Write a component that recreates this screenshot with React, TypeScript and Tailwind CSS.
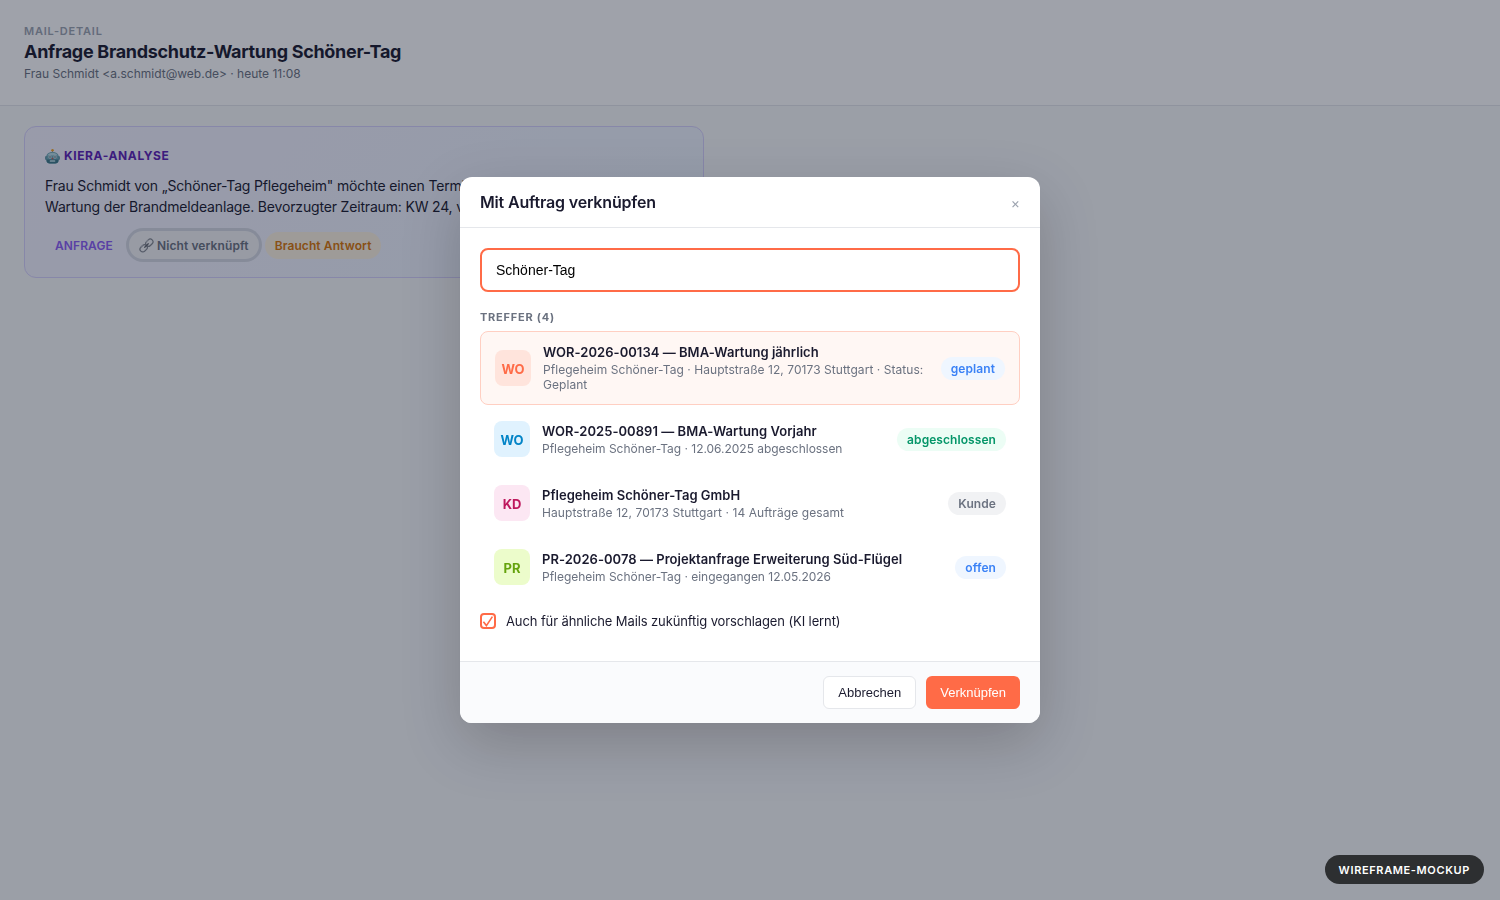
import clsx from "clsx";

interface Hit {
  code: string;
  title: string;
  sub: string;
  status: string;
  iconClass: string;
  subClass: string;
  statusClass: string;
  active?: boolean;
}

const hits: Hit[] = [
  {
    code: "WO",
    title: "WOR-2026-00134 — BMA-Wartung jährlich",
    sub: "Pflegeheim Schöner-Tag · Hauptstraße 12, 70173 Stuttgart · Status: Geplant",
    status: "geplant",
    iconClass: "bg-[#ffe4dc] text-[#ff6b47]",
    subClass: "tracking-[0.05px]",
    statusClass: "bg-[#eff6ff] text-[#3b82f6]",
    active: true,
  },
  {
    code: "WO",
    title: "WOR-2025-00891 — BMA-Wartung Vorjahr",
    sub: "Pflegeheim Schöner-Tag · 12.06.2025 abgeschlossen",
    status: "abgeschlossen",
    iconClass: "bg-[#e0f2fe] text-[#0284c7]",
    subClass: "tracking-[-0.03px]",
    statusClass: "bg-[#ecfdf5] text-[#059669]",
  },
  {
    code: "KD",
    title: "Pflegeheim Schöner-Tag GmbH",
    sub: "Hauptstraße 12, 70173 Stuttgart · 14 Aufträge gesamt",
    status: "Kunde",
    iconClass: "bg-[#fce7f3] text-[#be185d]",
    subClass: "tracking-[0.08px]",
    statusClass: "bg-[#f1f2f4] text-[#6b7280]",
  },
  {
    code: "PR",
    title: "PR-2026-0078 — Projektanfrage Erweiterung Süd-Flügel",
    sub: "Pflegeheim Schöner-Tag · eingegangen 12.05.2026",
    status: "offen",
    iconClass: "bg-[#ecfccb] text-[#65a30d]",
    subClass: "tracking-[-0.03px]",
    statusClass: "bg-[#eff6ff] text-[#3b82f6]",
  },
];

const RobotIcon = () => (
  <svg className="size-[15px] shrink-0" viewBox="0 0 30 30">
    <path d="M15 3v5" stroke="#8a8f98" strokeWidth="2" />
    <circle cx="15" cy="2.5" r="2.5" fill="#f5a623" />
    <rect x="0.5" y="14" width="4" height="8" rx="2" fill="#3f7f90" />
    <rect x="25.5" y="14" width="4" height="8" rx="2" fill="#3f7f90" />
    <path d="M2.5 16C2.5 9 8 6 15 6s12.500 3 12.500 10v6c0 5-3 7-7 7h-11c-4 0-7-2-7-7z" fill="#6fa9b6" />
    <path d="M5 13C6.500 9 10 7.500 15 7.500s8.500 1.500 10 5.500z" fill="#b9dce4" />
    <path d="M3 21h24v1c0 5-3 7-7 7H10c-4 0-7-2-7-7z" fill="#3d7888" />
    <circle cx="10" cy="16" r="3" fill="#e8f6fa" />
    <circle cx="20" cy="16" r="3" fill="#e8f6fa" />
    <circle cx="10" cy="16" r="1.500" fill="#24404c" />
    <circle cx="20" cy="16" r="1.500" fill="#24404c" />
    <path d="m15 17 2 3.500h-4z" fill="#e0483e" />
    <rect x="9.5" y="22.5" width="11" height="3" rx="1" fill="#bfe0e6" />
  </svg>
);

const LinkIcon = () => (
  <svg className="size-[15px] shrink-0" viewBox="0 0 30 30" fill="none">
    <g transform="rotate(-45 15 15)" strokeWidth="2.4">
      <rect x="-1" y="9.5" width="16" height="11" rx="5.5" stroke="#83878f" />
      <rect x="15" y="9.5" width="16" height="11" rx="5.5" stroke="#83878f" />
      <path d="M10 15h10" stroke="#62666e" strokeLinecap="round" />
      <path d="M4 9.500h7M19 9.500h7" stroke="#d3d6dc" strokeWidth="1" />
    </g>
  </svg>
);

const HitRow = ({ hit }: { hit: Hit }) => (
  <div
    className={clsx(
      "mb-1 flex items-center gap-3 rounded-lg px-3.5 py-3",
      hit.active && "border border-[#ffcfc2] bg-[#fff7f4]",
    )}
  >
    <div
      className={clsx(
        "flex size-9 shrink-0 items-center justify-center rounded-lg pt-px text-[13px] leading-4 font-bold",
        hit.iconClass,
      )}
    >
      {hit.code}
    </div>
    <div className="min-w-0 flex-1">
      <div className="text-[13px] leading-4 font-semibold tracking-[0.03px]">{hit.title}</div>
      <div className={clsx("mt-0.5 text-xs leading-[15px] text-[#6b7280]", hit.subClass)}>
        {hit.sub}
      </div>
    </div>
    <span
      className={clsx(
        "shrink-0 rounded-full px-2.5 py-1 text-xs leading-[15px] font-semibold tracking-[0.07px]",
        hit.statusClass,
      )}
    >
      {hit.status}
    </span>
  </div>
);

const MailDetail = () => (
  <div className="h-full bg-[#f9fafb]">
    <header className="h-[106px] border-b border-[#e5e7eb] bg-white px-6 pt-6">
      <div className="text-[11px] leading-[14px] font-semibold tracking-[0.77px] text-[#9ca3af]">
        MAIL-DETAIL
      </div>
      <h1 className="mt-[3px] text-lg leading-[22px] font-bold tracking-[-0.3px]">
        Anfrage Brandschutz-Wartung Schöner-Tag
      </h1>
      <div className="mt-[3px] text-xs leading-[15px] text-[#6b7280]">
        Frau Schmidt &lt;a.schmidt@web.de&gt; · heute 11:08
      </div>
    </header>

    <section className="mt-5 ml-6 h-[152px] w-[680px] rounded-xl border border-[#d8d2fd] bg-linear-135 from-[#f5f3ff] to-[#eff6ff] px-5 pt-5">
      <div className="flex h-[18px] items-center gap-1 text-xs font-bold tracking-[0.6px] text-[#5b21b6]">
        <RobotIcon />
        KIERA-ANALYSE
      </div>
      <p className="mt-2.5 text-sm leading-[21px] tracking-[-0.17px]">
        Frau Schmidt von „Schöner-Tag Pflegeheim" möchte einen Termin zur jährlichen
        <br />
        Wartung der Brandmeldeanlage. Bevorzugter Zeitraum: KW 24, vormittags.
      </p>
      <div className="mt-3.5 flex items-center gap-1.5 text-xs leading-[15px] font-semibold tracking-[0.1px]">
        <span className="rounded-full px-2.5 py-1.5 text-[#8b5cf6]">ANFRAGE</span>
        <span className="flex h-7 items-center gap-[3px] rounded-full bg-[#f3f4f6] px-2.5 text-[#6b7280] ring-3 ring-[#d6d9e3]">
          <LinkIcon />
          Nicht verknüpft
        </span>
        <span className="rounded-full bg-[#fef3e2] px-2.5 py-1.5 text-[#d97706]">
          Braucht Antwort
        </span>
      </div>
    </section>
  </div>
);

const LinkDialog = () => (
  <div className="flex h-[546px] w-[580px] flex-col overflow-hidden rounded-xl bg-white shadow-[0_20px_60px_rgba(0,0,0,0.2)]">
    <div className="flex h-[51px] shrink-0 items-center justify-between border-b border-[#e5e7eb] px-5">
      <h2 className="text-base leading-5 font-semibold tracking-[-0.17px]">
        Mit Auftrag verknüpfen
      </h2>
      <button className="pt-0.5 text-sm leading-4 text-[#9ca3af]">×</button>
    </div>

    <div className="flex-1 px-5 pt-5">
      <input
        className="block h-11 w-full rounded-lg border-2 border-[#ff6b47] bg-white px-3.5 font-['Liberation_Sans',sans-serif] text-sm text-black outline-none"
        defaultValue="Schöner-Tag"
      />
      <div className="mt-[18px] mb-[7px] text-[11px] leading-[14px] font-bold tracking-[0.77px] text-[#6b7280]">
        TREFFER (4)
      </div>
      {hits.map((hit) => (
        <HitRow key={hit.title} hit={hit} />
      ))}
      <label className="mt-4 flex items-center gap-2.5 text-[13px] leading-4 tracking-[-0.11px]">
        <span className="flex size-4 items-center justify-center rounded-sm border-2 border-[#ff6b47]">
          <svg
            className="size-3 overflow-visible"
            viewBox="0 0 12 12"
            fill="none"
            stroke="#ff6b47"
            strokeWidth="1.6"
          >
            <path d="M1.4 6.800 4.400 10.600 10.400 1.600" />
          </svg>
        </span>
        Auch für ähnliche Mails zukünftig vorschlagen (KI lernt)
      </label>
    </div>

    <div className="flex h-[62px] shrink-0 items-center justify-end gap-2.5 border-t border-[#e5e7eb] bg-[#fafbfd] px-5 font-['Liberation_Sans',sans-serif] text-[13px]">
      <button className="h-[33px] rounded-md border border-[#e5e7eb] bg-white px-3.5">
        Abbrechen
      </button>
      <button className="h-[33px] rounded-md bg-[#ff6b47] px-3.5 text-white">Verknüpfen</button>
    </div>
  </div>
);

export default function App() {
  return (
    <div className="relative h-screen overflow-hidden font-[Inter,sans-serif] text-[#1a1a2e]">
      <MailDetail />
      <div className="fixed inset-0 flex items-center justify-center bg-[#0f172a]/40">
        <LinkDialog />
      </div>
      <div className="fixed right-4 bottom-4 rounded-full bg-[#2d2f31] px-3.5 pt-[9px] pb-[7px] text-[11px] leading-[13px] font-semibold tracking-[0.63px] text-white">
        WIREFRAME-MOCKUP
      </div>
    </div>
  );
}
